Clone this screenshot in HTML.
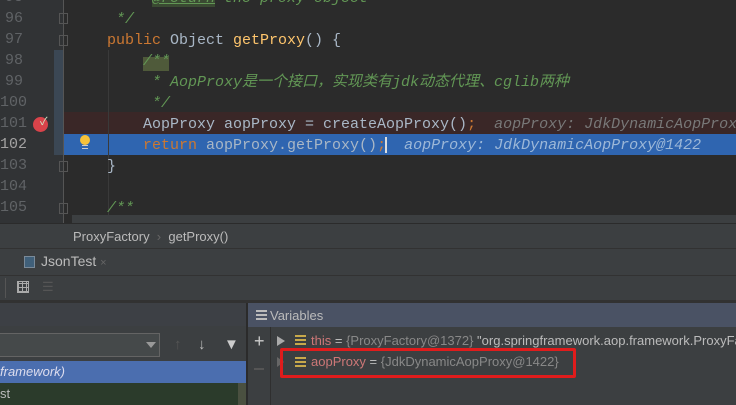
<!DOCTYPE html>
<html style="width:736px;height:405px;overflow:hidden"><head><meta charset="utf-8"><style>
*{margin:0;padding:0;box-sizing:border-box}
body{width:736px;height:405px;overflow:hidden;background:#2b2b2b;position:relative;font-family:"Liberation Sans","Noto Sans CJK SC",sans-serif}
.a{position:absolute}
.code{font-family:"Liberation Mono","Noto Sans CJK SC",monospace;font-size:15px;white-space:pre;line-height:21px;color:#a9b7c6}
.ln{font-family:"Liberation Mono",monospace;font-size:15px;color:#606366;text-align:right;width:23px;line-height:21px}
.cm{color:#629755;font-style:italic}
.kw{color:#cc7832}
.fn{color:#ffc66d}
.hint{color:#787878;font-style:italic}
.ui{font-size:13px;color:#bbbbbb;white-space:nowrap}
</style></head><body>
<div class="a" style="left:0;top:0;width:64px;height:225px;background:#313335"></div>
<div class="a" style="left:54px;top:50px;width:9px;height:105px;background:#3b4754"></div>
<div class="a" style="left:64px;top:112px;width:672px;height:22px;background:#3a2727"></div>
<div class="a" style="left:64px;top:134px;width:672px;height:21px;background:#2f65b0"></div>
<div class="a" style="left:108px;top:50px;width:1px;height:165px;background:#3a3a3a"></div>
<div class="a ln" style="left:0;top:-13px">95<br>96<br>97<br>98<br>99<br>100<br>101<br><span style="color:#a4a3a3">102</span><br>103<br>104<br>105</div>
<div class="a" style="left:59px;top:13px;width:9px;height:11px;border:1px solid #555"></div>
<div class="a" style="left:59px;top:35px;width:9px;height:11px;border:1px solid #555"></div>
<div class="a" style="left:59px;top:161px;width:9px;height:11px;border:1px solid #555"></div>
<div class="a" style="left:59px;top:203px;width:9px;height:11px;border:1px solid #555"></div>
<div class="a" style="left:63px;top:0;width:1px;height:225px;background:#555"></div>
<div class="a" style="left:33px;top:117px;width:15px;height:15px;border-radius:50%;background:#d9434a"></div>
<div class="a" style="left:40px;top:113px;color:#cfe7c6;font-size:11px">✓</div>
<div class="a" style="left:80px;top:135px;width:10px;height:10px;border-radius:50%;background:#f7c23a"></div>
<div class="a" style="left:82px;top:145px;width:6px;height:4px;border-top:1px solid #ccc;border-bottom:1px solid #ccc"></div>
<div class="a" style="left:143px;top:57px;width:26px;height:14px;background:#4f5a3a"></div>
<div class="a code" style="left:107px;top:-12px;width:629px;height:237px;overflow:hidden"><span class="cm">     <span style="background:#3a4a32;text-decoration:underline">@return</span> the proxy object</span>
<span class="cm"> */</span>
<span class="kw">public</span> Object <span class="fn">getProxy</span>() {
    <span class="cm">/**</span>
<span class="cm">     * AopProxy是一个接口，实现类有jdk动态代理、cglib两种</span>
<span class="cm">     */</span>
    AopProxy aopProxy = createAopProxy()<span class="kw">;</span>  <span class="hint">aopProxy: JdkDynamicAopProxy@1422</span>
    <span class="kw">return</span> aopProxy.getProxy()<span class="kw">;</span>  <span class="hint" style="color:#9db8d8">aopProxy: JdkDynamicAopProxy@1422</span>
}

<span class="cm">/**</span></div>
<div class="a" style="left:385px;top:137px;width:2px;height:16px;background:#ddd"></div>
<div class="a" style="left:72px;top:215px;width:664px;height:8px;background:#3c3f41"></div>
<div class="a" style="left:0;top:223px;width:736px;height:25px;background:#3c3f41;border-top:1px solid #2b2b2b"></div>
<div class="a ui" style="left:73px;top:229px">ProxyFactory <span style="color:#666">&nbsp;›&nbsp;</span> getProxy()</div>
<div class="a" style="left:0;top:248px;width:736px;height:27px;background:#3c3f41;border-top:1px solid #323232"></div>
<div class="a" style="left:24px;top:256px;width:11px;height:12px;border:1px solid #7a8a99;background:#40607a"></div>
<div class="a ui" style="left:41px;top:253px;font-size:14px">JsonTest <span style="color:#666;font-size:11px">×</span></div>
<div class="a" style="left:0;top:275px;width:736px;height:27px;background:#3c3f41;border-top:1px solid #323232"></div>
<div class="a" style="left:5px;top:278px;width:1px;height:20px;background:#555"></div>
<div class="a" style="left:17px;top:281px;width:12px;height:12px;border:1px solid #aaa;background:repeating-linear-gradient(90deg,#aaa 0 1px,transparent 1px 4px),repeating-linear-gradient(0deg,#aaa 0 1px,transparent 1px 4px)"></div>
<div class="a ui" style="left:42px;top:279px;color:#555">☰</div>
<div class="a" style="left:0;top:300px;width:736px;height:3px;background:#323232"></div>
<div class="a" style="left:0;top:303px;width:246px;height:102px;background:#3c3f41"></div>
<div class="a" style="left:0;top:303px;width:246px;height:23px;background:#3d4045"></div>
<div class="a" style="left:0;top:333px;width:160px;height:24px;border:1px solid #646464;background:#45494a;border-left:none"></div>
<div class="a" style="left:146px;top:342px;width:0;height:0;border-left:5px solid transparent;border-right:5px solid transparent;border-top:6px solid #999"></div>
<div class="a ui" style="left:174px;top:336px;color:#555;font-size:15px">↑</div>
<div class="a ui" style="left:198px;top:336px;font-size:15px">↓</div>
<div class="a ui" style="left:224px;top:336px;font-size:15px;color:#ccc">▼</div>
<div class="a" style="left:0;top:361px;width:246px;height:22px;background:#4b6eaf"></div>
<div class="a ui" style="left:0;top:364px;font-style:italic;color:#dde;width:246px;overflow:hidden">framework)</div>
<div class="a" style="left:0;top:383px;width:238px;height:22px;background:#2b3b2b"></div>
<div class="a ui" style="left:0;top:386px">st</div>
<div class="a" style="left:238px;top:383px;width:8px;height:22px;background:#4a5040"></div>
<div class="a" style="left:246px;top:303px;width:2px;height:102px;background:#2b2b2b"></div>
<div class="a" style="left:248px;top:303px;width:488px;height:102px;background:#3c3f41"></div>
<div class="a" style="left:248px;top:303px;width:488px;height:24px;background:#4a5264"></div>
<div class="a" style="left:256px;top:309px;width:11px;height:11px;background:repeating-linear-gradient(0deg,#bbb 0 2px,transparent 2px 4px)"></div>
<div class="a ui" style="left:270px;top:308px">Variables</div>
<div class="a" style="left:270px;top:327px;width:1px;height:78px;background:#2f2f2f"></div>
<div class="a ui" style="left:254px;top:331px;font-size:18px;color:#ccc">+</div>
<div class="a" style="left:254px;top:368px;width:10px;height:2px;background:#555"></div>
<div class="a" style="left:277px;top:336px;width:0;height:0;border-top:5px solid transparent;border-bottom:5px solid transparent;border-left:8px solid #aaa"></div>
<div class="a" style="left:295px;top:334px;width:11px;height:11px;background:repeating-linear-gradient(0deg,#c8a94b 0 2px,transparent 2px 4px)"></div>
<div class="a ui" style="left:311px;top:333px;width:425px;overflow:hidden"><span style="color:#c77">this</span> = <span style="color:#888">{ProxyFactory@1372}</span> "org.springframework.aop.framework.ProxyFactory</div>
<div class="a" style="left:277px;top:357px;width:0;height:0;border-top:5px solid transparent;border-bottom:5px solid transparent;border-left:7px solid #666"></div>
<div class="a" style="left:295px;top:356px;width:11px;height:11px;background:repeating-linear-gradient(0deg,#c8a94b 0 2px,transparent 2px 4px)"></div>
<div class="a ui" style="left:311px;top:354px"><span style="color:#c77">aopProxy</span> = <span style="color:#888">{JdkDynamicAopProxy@1422}</span></div>
<div class="a" style="left:280px;top:348px;width:296px;height:30px;border:3px solid #e01c1c;border-radius:2px"></div>
</body></html>
